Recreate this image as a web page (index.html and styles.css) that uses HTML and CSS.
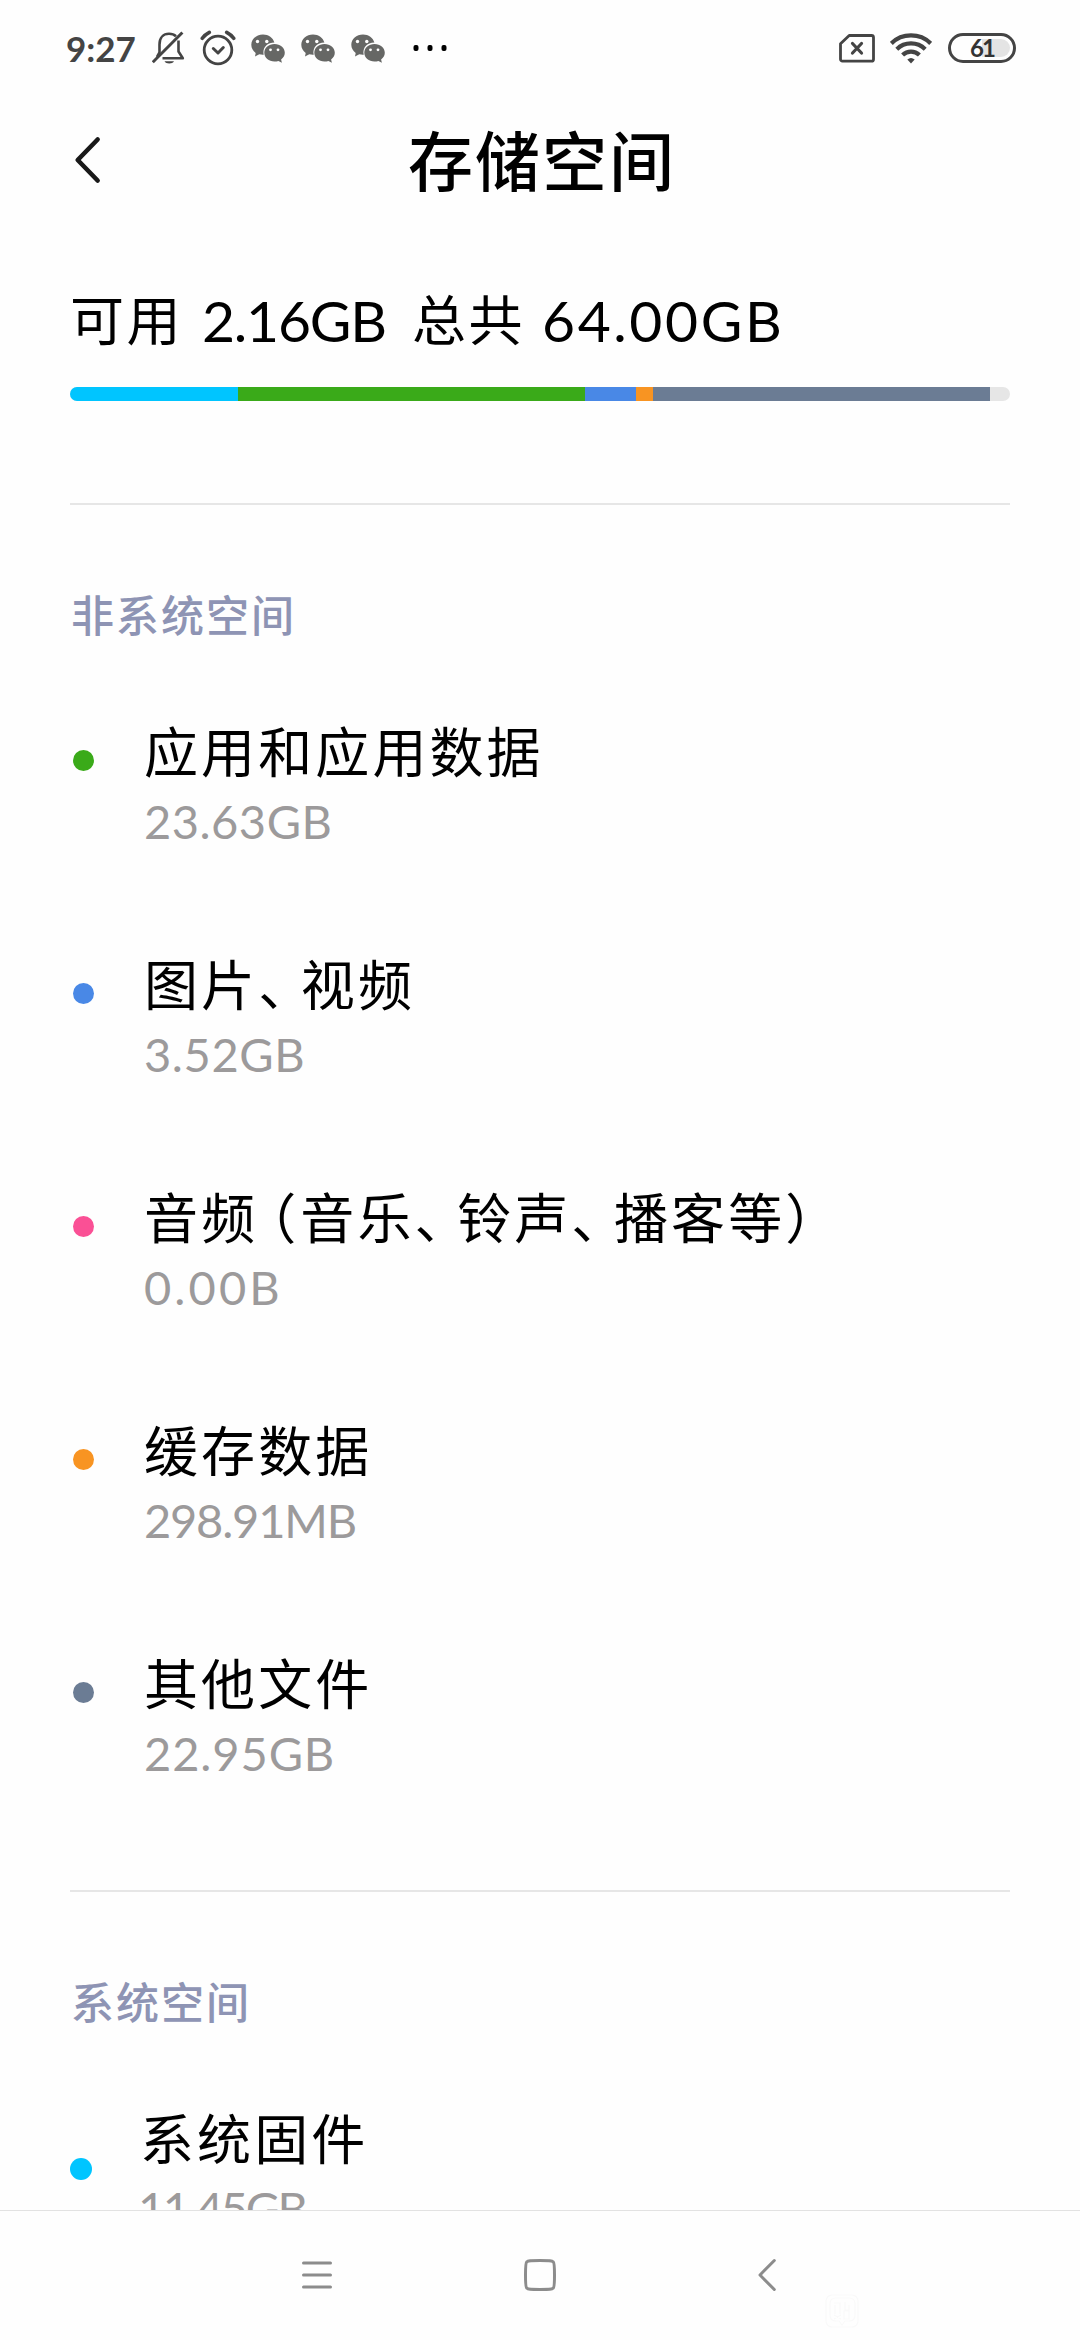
FILE: index.html
```html
<!DOCTYPE html>
<html lang="zh-CN">
<head>
<meta charset="utf-8">
<title>存储空间</title>
<link rel="stylesheet" href="styles.css">
</head>
<body>
<svg class="defs" width="0" height="0">
  <symbol id="wechat" viewBox="0 0 34 29">
    <path fill="#666765" d="M12 0.5C5.4 0.5 0.3 5.1 0.3 10.8c0 3.3 1.7 6.2 4.400 8.100L4 22.600l4.300-2.300c1.500.4 3 .5 4.400.4C11.200 14 16 8.600 23.400 8.600 22.200 3.900 17.500.5 12 .5z"/>
    <path fill="#666765" d="M23.500 10C17.800 10 13.300 13.900 13.300 18.800s4.500 8.700 10.200 8.700c1.400 0 2.700-.2 3.900-.6l3.500 1.800-.8-3.200c2.300-1.600 3.700-4 3.700-6.700 0-4.900-4.600-8.800-10.300-8.800z"/>
    <g fill="#fff"><circle cx="6.500" cy="7.500" r="1.700"/><circle cx="15.800" cy="7.500" r="1.700"/><circle cx="19.500" cy="15.800" r="1.400"/><circle cx="27" cy="15.800" r="1.400"/></g>
  </symbol>
</svg>
<div class="screen">
  <header class="status">
    <span class="clock">9:27</span>
    <svg class="bell" width="34" height="34" viewBox="0 0 34 34" fill="none" stroke="#444" stroke-width="2.600" stroke-linejoin="round">
      <path d="M24 5.300C22.300 3.700 20 2.800 17 2.800 11.500 2.800 7.500 6.500 7.500 13.500v8L5 26M26.500 9.500v11l4.300 6.800H10.500"/>
      <path d="M1.800 30.200L29.300 2.500" stroke-width="3" stroke-linecap="square"/>
      <path d="M12.500 30.300h9.500c-1.500 3-8 3-9.500 0z" fill="#444" stroke="none"/>
    </svg>
    <svg class="alarm" width="36" height="36" viewBox="0 0 36 36" fill="none" stroke="#444" stroke-width="2.800" stroke-linecap="round" stroke-linejoin="round">
      <circle cx="18" cy="20" r="13.800"/><path d="M13.300 18.500l4.700 4.500 5.300-5.500" stroke-width="3"/><path d="M2.300 8.300Q5 4.500 9.300 2.300M26.700 2.300Q31 4.500 33.700 8.300" stroke-width="3.600"/>
    </svg>
    <svg class="chat" width="34" height="29"><use href="#wechat"/></svg>
    <svg class="chat" width="34" height="29"><use href="#wechat"/></svg>
    <svg class="chat" width="34" height="29"><use href="#wechat"/></svg>
    <svg class="more" width="34" height="8" viewBox="0 0 34 8"><rect x=".5" y="1" width="5" height="6" rx="2"/><rect x="14.500" y="1" width="5" height="6" rx="2"/><rect x="28.500" y="1" width="5" height="6" rx="2"/></svg>
    <svg class="sim" width="36" height="29" viewBox="0 0 36 29" fill="none" stroke="#444" stroke-width="2.800" stroke-linejoin="round" stroke-linecap="round">
      <path d="M10.200 1.500H32.500a2 2 0 0 1 2 2v21.700a2 2 0 0 1-2 2H3.500a2 2 0 0 1-2-2V9.700z"/><path d="M13.500 9.500l9 9.500M22.500 9.500l-9 9.500" stroke-width="3.200"/>
    </svg>
    <svg class="wifi" width="42" height="31" viewBox="0 0 42 31" fill="none" stroke="#444" stroke-width="4.200">
      <path d="M1.300 10.400C12-.3 30-.3 40.700 10.400"/><path d="M6.800 16.200c7.800-7.700 20.600-7.700 28.400 0"/><path d="M12.600 22c4.700-4.600 12.100-4.600 16.800 0"/><path d="M17.300 26.500q3.700-3 7.400 0L21 30.500z" fill="#444" stroke="none"/>
    </svg>
    <span class="battery">61</span>
  </header>

  <div class="titlebar">
    <svg class="back" width="30" height="50" viewBox="0 0 30 50" fill="none" stroke="#191919" stroke-width="4.600" stroke-linecap="round" stroke-linejoin="round"><path d="M25.600 4.500L5.700 25l19.900 20.500"/></svg>
    <h1>存储空间</h1>
  </div>

  <main class="content">
    <section class="summary">
      <p class="usage"><span>可用</span><span class="free">2.16GB</span><span>总共</span><span class="total">64.00GB</span></p>
      <div class="bar">
        <i class="cyan" style="width:168px"></i><i class="green" style="width:347px"></i><i class="blue" style="width:51px"></i><i class="orange" style="width:17px"></i><i class="slate" style="width:337px"></i>
      </div>
    </section>

    <section class="group">
      <h2>非系统空间</h2>
      <ul>
        <li><i class="dot green"></i><div><p class="name">应用和应用数据</p><p class="size s1">23.63GB</p></div></li>
        <li><i class="dot blue"></i><div><p class="name">图片<span class="comma">、</span>视频</p><p class="size s2">3.52GB</p></div></li>
        <li><i class="dot pink"></i><div><p class="name">音频<span class="open">（</span>音乐<span class="comma">、</span>铃声<span class="comma">、</span>播客等）</p><p class="size s3">0.00B</p></div></li>
        <li><i class="dot orange"></i><div><p class="name">缓存数据</p><p class="size s4">298.91MB</p></div></li>
        <li><i class="dot slate"></i><div><p class="name">其他文件</p><p class="size s5">22.95GB</p></div></li>
      </ul>
    </section>

    <section class="group system">
      <h2>系统空间</h2>
      <ul>
        <li><i class="dot cyan"></i><div><p class="name">系统固件</p><p class="size s6">11.45GB</p></div></li>
      </ul>
    </section>
  </main>

  <nav class="navbar">
    <svg width="32" height="34" viewBox="0 0 32 34" stroke="#8c8c8c" stroke-width="3" stroke-linecap="round"><path d="M2.500 5h27M2.500 17h27M2.500 29h27"/></svg>
    <svg width="34" height="34" viewBox="0 0 34 34" fill="none" stroke="#8c8c8c" stroke-width="3"><path d="M17 2.500c10 0 12 0 13.300 1.400C31.500 5 31.500 8 31.500 17s0 12-1.200 13.100C29 31.500 27 31.500 17 31.500s-12 0-13.300-1.400C2.500 29 2.500 26 2.500 17s0-12 1.200-13.100C5 2.500 7 2.500 17 2.500z"/></svg>
    <svg width="20" height="34" viewBox="0 0 20 34" fill="none" stroke="#8c8c8c" stroke-width="3" stroke-linecap="round" stroke-linejoin="round"><path d="M17.300 2.500L3 17l14.300 14.500"/></svg>
    <svg class="mark" width="34" height="34" viewBox="0 0 34 34" fill="none" stroke="#f9f9f9" stroke-width="1.200"><rect x="1" y="1" width="32" height="32" rx="6"/><path d="M11 4h13q6 0 6 6v11q0 6-6 6h-4l-3 4-3-4h-3q-6 0-6-6V10q0-6 6-6zM9 9h6v11M10 11v9M20 8v8h4V11M19 17h5v8h-5zM9 21l7 4M16 21l-7 4"/></svg>
  </nav>
</div>
</body>
</html>
```
FILE: styles.css
```css
* { box-sizing: border-box; margin: 0; padding: 0; }

body {
  background: #fefefe;
  font-family: Lato, "Noto Sans CJK SC", sans-serif;
  color: #000;
}

.defs { display: block; }
svg { display: block; flex: none; }
ul { list-style: none; }

.screen {
  width: 1080px;
  height: 2340px;
  display: flex;
  flex-direction: column;
  overflow: hidden;
}

/* status bar */
.status {
  height: 96px;
  flex: none;
  display: flex;
  align-items: center;
  padding: 0 64px 0 66px;
}
.clock {
  width: 86px;
  font-size: 35px;
  font-weight: 700;
  line-height: 38px;
  padding-bottom: 1px;
  color: #444;
}
.alarm { margin: 0 15px 0 14px; }
.chat { margin-right: 16px; }
.more { margin-left: 12px; }
.sim { margin-left: auto; margin-right: 15px; }
.wifi { margin-right: 16px; }
.battery {
  width: 68px;
  height: 30px;
  border: 3px solid #444;
  border-radius: 15px;
  padding: 3px;
  text-align: center;
  font-size: 24px;
  font-weight: 700;
  line-height: 18px;
  letter-spacing: -2px;
  color: #333;
  background: linear-gradient(90deg, transparent 50%, #e4e4e4 50%) content-box;
}

/* title */
.titlebar {
  height: 160px;
  flex: none;
  display: grid;
  grid-template-columns: 152px 1fr 148px;
  padding-top: 14px;
}
.back { margin: 25px 0 0 72px; }
h1 {
  padding-top: 1px;
  text-align: center;
  font-size: 65px;
  font-weight: 500;
  line-height: 100px;
  letter-spacing: 2px;
}

.content {
  flex: 1;
  min-height: 0;
  overflow: hidden;
  padding: 0 70px;
}

/* usage */
.summary { height: 249px; border-bottom: 2px solid #e6e6e6; padding-top: 30px; }
.usage {
  display: flex;
  height: 70px;
  line-height: 70px;
  font-size: 54px;
  letter-spacing: 2.500px;
}
.usage .free { font-size: 57px; line-height: 68px; letter-spacing: -1.200px; margin-left: 19px; width: 210px; }
.usage .total { font-size: 57px; line-height: 68px; letter-spacing: 2.600px; margin-left: 17px; }
.bar {
  display: flex;
  height: 14px;
  margin-top: 31px;
  border-radius: 7px;
  background: #e6e6e6;
  overflow: hidden;
}

.cyan { background: #00c5ff; }
.green { background: #3aaa19; }
.blue { background: #4988e6; }
.orange { background: #f89422; }
.slate { background: #6b7c94; }
.pink { background: #fa5095; }

/* groups */
.group { padding-top: 81px; }
h2 {
  font-size: 43px;
  font-weight: 500;
  line-height: 60px;
  letter-spacing: 2px;
  color: #8e94b4;
  padding-left: 1px;
}
.group ul { height: 1246px; padding-top: 71px; border-bottom: 2px solid #e6e6e6; }
.group li { display: flex; height: 233px; }
.dot { flex: none; width: 21px; height: 21px; border-radius: 50%; margin: 33px 50px 0 3px; }
.name { padding-top: 1px; font-size: 54px; line-height: 70px; letter-spacing: 3.100px; white-space: nowrap; }

/* punctuation set narrower than a full em */
.comma, .open { font-feature-settings: "halt"; }
.comma { margin-right: 12.500px; }
.open { margin: 0 1px 0 11px; }

.size { margin-top: 5px; font-size: 47px; line-height: 56px; color: #9c9a9b; }
.s1 { letter-spacing: 0.500px; }
.s2 { letter-spacing: 0.600px; }
.s3 { letter-spacing: 3.100px; }
.s4 { letter-spacing: -1.200px; }
.s5 { letter-spacing: 0.900px; }
.s6 { letter-spacing: -2.500px; }

.system ul { height: auto; padding-top: 71px; }
.system .dot { width: 22px; height: 22px; margin: 54px 46px 0 0; }
.system .name { padding: 1px 0 0 2px; }

/* navigation */
.navbar {
  height: 130px;
  flex: none;
  display: flex;
  align-items: flex-start;
  border-top: 1px solid #e2e2e2;
  padding: 47px 0 0 301px;
}
.navbar svg:nth-child(2) { margin-left: 190px; }
.navbar svg:nth-child(3) { margin-left: 200px; }
.navbar .mark { margin: 36px 0 0 48px; }
```
